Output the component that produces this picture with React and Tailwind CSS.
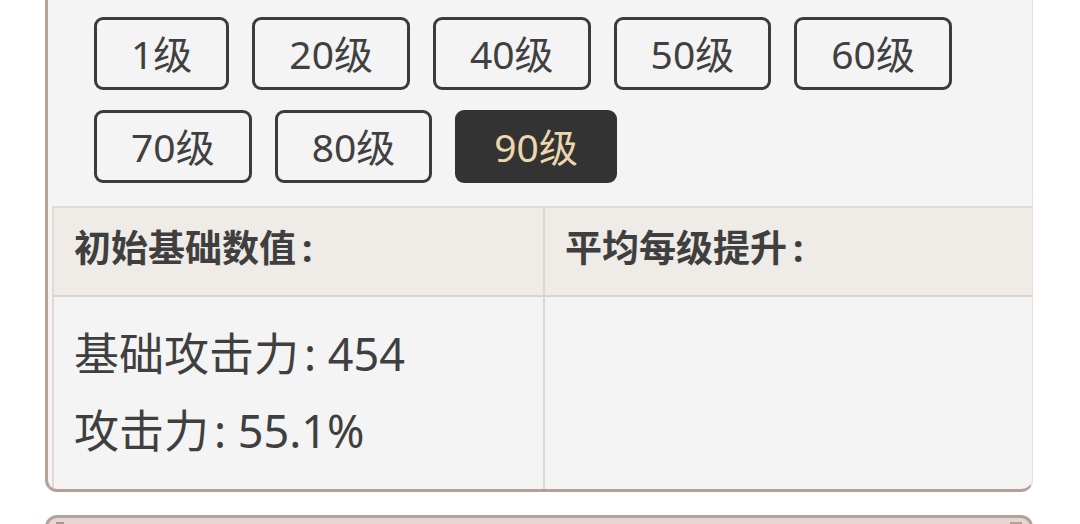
import React, { useState } from "react";

const LEVELS = [1, 20, 40, 50, 60, 70, 80, 90];

const Colon = () => (
  <>
    <span className="ml-[5px]">:</span>{" "}
  </>
);

const App = () => {
  const [level, setLevel] = useState(90);

  return (
    <div
      className="min-h-screen bg-white text-[#3f3f3f]"
      style={{ fontFamily: '"Noto Sans", "Noto Sans CJK SC", sans-serif' }}
    >
      {/* level card */}
      <div className="ml-[45px] w-[988px] bg-[#f4f4f4] border-l-[3px] border-b-[3px] border-r border-l-[#b7a29a] border-b-[#b4a098] border-r-[#e6dfdb] rounded-b-[12px] overflow-hidden">
        <div className="flex flex-wrap gap-x-[23px] gap-y-5 pt-[17px] pl-[46px]">
          {LEVELS.map((lv) => (
            <button
              key={lv}
              onClick={() => setLevel(lv)}
              className={
                lv === level
                  ? "h-[73px] px-[39px] rounded-[9px] bg-[#333333] text-[#ecd7ad] text-[39px] leading-none flex items-center"
                  : "h-[73px] px-[34px] rounded-[9px] border-[3px] border-[#3b3b3b] text-[#404040] text-[39px] leading-none flex items-center"
              }
            >
              {lv}级
            </button>
          ))}
        </div>

        <div className="mt-[23px] ml-1 grid grid-cols-[491px_1fr] border-l-2 border-t-2 border-[#e3dad2]">
          <div className="flex flex-col border-r-2 border-[#dcd7d1]">
            <div className="h-[89px] bg-[#efebe6] border-b-2 border-[#ddd3cb] px-5 pb-2 flex items-center text-[37px] font-bold">
              初始基础数值<span className="ml-[6px]">:</span>
            </div>
            <div className="px-5 pt-[18px] pb-[20px] text-[45px] leading-[77px]">
              <div>
                基础攻击力<Colon />454
              </div>
              <div>
                攻击力<Colon />55.1%
              </div>
            </div>
          </div>
          <div className="flex flex-col">
            <div className="h-[89px] bg-[#efebe6] border-b-2 border-[#ddd3cb] px-5 pb-2 flex items-center text-[37px] font-bold">
              平均每级提升<span className="ml-[6px]">:</span>
            </div>
            <div className="flex-1" />
          </div>
        </div>
      </div>

      {/* next card, cut off */}
      <div className="mt-[23px] ml-[45px] w-[988px] h-[20px] bg-[#e3d8d1] border-t-[3px] border-x-[3px] border-[#b7a29a] rounded-t-[12px] flex justify-between px-2 pt-1">
        <div className="w-2 h-4 bg-[#a8938b]" />
        <div className="w-3 h-4 bg-[#b8a39b]" />
      </div>
    </div>
  );
};

export default App;
